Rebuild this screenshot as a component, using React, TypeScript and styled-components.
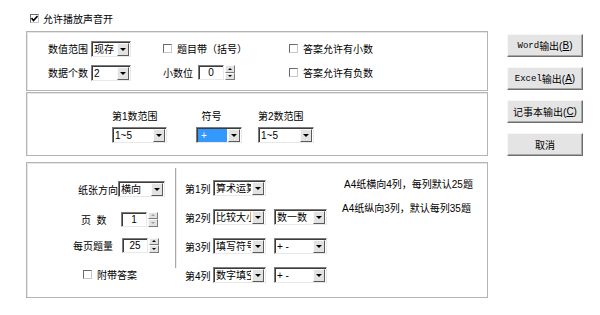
import React from "react";
import styled, { createGlobalStyle, css } from "styled-components";

const Global = createGlobalStyle`
  html, body { margin: 0; padding: 0; background: #fff; }
  body { font-family: "Liberation Sans", "Noto Sans CJK SC", sans-serif; font-size: 10px; color: #000; }
  * { box-sizing: border-box; }
`;

const Page = styled.div`
  width: 600px;
  height: 315px;
  display: flex;
  padding: 12px 0 0 26px;
  background: #fff;
`;

const LeftCol = styled.div`
  width: 462px;
  display: flex;
  flex-direction: column;
`;

const RightCol = styled.div`
  margin-left: 19px;
  padding-top: 22px;
  display: flex;
  flex-direction: column;
  gap: 10px;
`;

const Button = styled.div`
  width: 76px;
  height: 23px;
  display: flex;
  align-items: center;
  justify-content: center;
  background: #e4e4e4;
  border: 1px solid;
  border-color: #f8f8f8 #6e6e6e #6e6e6e #f8f8f8;
  box-shadow: inset -1px -1px 0 #a8a8a8;
  font-size: 10px;
  white-space: nowrap;
`;

const Mono = styled.span`
  font-family: "Liberation Mono", "Noto Sans CJK SC", monospace;
  font-size: 9px;
`;

const Group = styled.div<{ $h: number; $mt: number }>`
  height: ${(p) => p.$h}px;
  margin-top: ${(p) => p.$mt}px;
  border: 1px solid #b4b4b4;
  box-shadow: inset 1px 1px 0 #e6e6e6;
`;

const CheckRow = styled.label<{ $gap?: number }>`
  display: flex;
  align-items: center;
  gap: ${(p) => p.$gap ?? 5}px;
  height: 16px;
  white-space: nowrap;
`;

const Box = styled.span<{ $checked?: boolean }>`
  width: 9px;
  height: 9px;
  border: 1px solid;
  border-color: #6a6a6a #c8c8c8 #c8c8c8 #6a6a6a;
  background: #fff;
  display: inline-flex;
  align-items: center;
  justify-content: center;
  flex: none;
`;

const TopRow = styled.div`
  height: 12px;
  margin-left: 4px;
  display: flex;
  align-items: center;
`;

const ComboWrap = styled.div<{ $w: number }>`
  width: ${(p) => p.$w}px;
  height: 16px;
  display: flex;
  border: 1px solid;
  border-color: #7c7c7c #e8e8e8 #e8e8e8 #7c7c7c;
  box-shadow: inset 1px 1px 0 #3c3c3c;
  background: #fff;
  padding: 1px 1px 0 1px;
  flex: none;
`;

const ComboText = styled.div<{ $sel?: boolean }>`
  flex: 1;
  overflow: hidden;
  white-space: nowrap;
  line-height: 13px;
  padding-left: 1px;
  margin-right: 1px;
  ${(p) =>
    p.$sel &&
    css`
      background: #3399ff;
      color: #fff;
      padding-left: 3px;
    `}
`;

const ComboBtn = styled.div`
  width: 12px;
  height: 13px;
  background: #e2e2e2;
  border: 1px solid;
  border-color: #fafafa #5a5a5a #5a5a5a #fafafa;
  display: flex;
  align-items: center;
  justify-content: center;
  flex: none;
  &::after {
    content: "";
    border-left: 3px solid transparent;
    border-right: 3px solid transparent;
    border-top: 3px solid #000;
  }
`;

const Combo = ({ w, text, sel }: { w: number; text: string; sel?: boolean }) => (
  <ComboWrap $w={w}>
    <ComboText $sel={sel}>{text}</ComboText>
    <ComboBtn />
  </ComboWrap>
);

const SpinWrap = styled.div`
  display: flex;
  align-items: stretch;
  height: 15px;
  flex: none;
`;

const SpinField = styled.div`
  width: 26px;
  border: 1px solid;
  border-color: #7c7c7c #e8e8e8 #e8e8e8 #7c7c7c;
  box-shadow: inset 1px 1px 0 #3c3c3c;
  background: #fff;
  text-align: center;
  line-height: 13px;
`;

const SpinBtns = styled.div`
  width: 10px;
  margin-left: 1px;
  display: flex;
  flex-direction: column;
`;

const SpinHalf = styled.div<{ $up?: boolean; $dim?: boolean }>`
  flex: 1;
  background: #e2e2e2;
  border: 1px solid;
  border-color: #fafafa #7a7a7a #7a7a7a #fafafa;
  display: flex;
  align-items: center;
  justify-content: center;
  &::after {
    content: "";
    border-left: 2px solid transparent;
    border-right: 2px solid transparent;
    ${(p) =>
      p.$up
        ? css`border-bottom: 2px solid ${p.$dim ? "#a0a0a0" : "#000"};`
        : css`border-top: 2px solid ${p.$dim ? "#a0a0a0" : "#000"};`}
  }
`;

const Spinner = ({ value, dim }: { value: string; dim?: boolean }) => (
  <SpinWrap>
    <SpinField>{value}</SpinField>
    <SpinBtns>
      <SpinHalf $up $dim={dim} />
      <SpinHalf $dim={dim} />
    </SpinBtns>
  </SpinWrap>
);

const Field = styled.div<{ $gap?: number }>`
  display: flex;
  align-items: center;
  gap: ${(p) => p.$gap ?? 3}px;
  height: 17px;
  white-space: nowrap;
`;

const Label = styled.span<{ $w?: number }>`
  white-space: pre;
  ${(p) => p.$w && css`width: ${p.$w}px;`}
`;

/* Group 1 */
const Grid1 = styled.div`
  display: grid;
  grid-template-columns: 115px 126px auto;
  grid-auto-rows: 17px;
  row-gap: 7px;
  padding: 8px 0 0 21px;
`;

/* Group 2 */
const Grid2 = styled.div`
  display: grid;
  grid-template-columns: 84px 62px auto;
  grid-template-rows: 14px 16px;
  row-gap: 5px;
  align-items: center;
  padding: 15px 0 0 85px;
`;

/* Group 3 */
const Split = styled.div`
  display: flex;
  height: 100%;
`;

const LeftPanel = styled.div`
  width: 148px;
  display: flex;
  flex-direction: column;
`;

const PanelRow = styled.div<{ $indent: number; $mt: number }>`
  display: flex;
  align-items: center;
  height: 16px;
  margin-left: ${(p) => p.$indent}px;
  margin-top: ${(p) => p.$mt}px;
  white-space: nowrap;
`;

const VLine = styled.div`
  width: 1px;
  height: 100px;
  margin-top: 5px;
  background: #a8a8a8;
  box-shadow: 1px 0 0 #ececec;
  flex: none;
`;

const ColsPanel = styled.div`
  width: 168px;
  display: flex;
  flex-direction: column;
  gap: 13px;
  padding: 17px 0 0 9px;
`;

const ColRow = styled.div`
  display: flex;
  align-items: center;
  height: 16px;
  white-space: nowrap;
`;

const ColLabel = styled.span`
  width: 28px;
`;

const InfoPanel = styled.div`
  display: flex;
  flex-direction: column;
  gap: 10px;
  padding-top: 15px;
  white-space: nowrap;
`;

const Info = styled.div<{ $indent: number }>`
  margin-left: ${(p) => p.$indent}px;
  line-height: 14px;
`;

const Check = ({ checked }: { checked?: boolean }) => (
  <Box $checked={checked}>
    {checked && (
      <svg width="7" height="7" viewBox="0 0 7 7">
        <path d="M0.5 3 L2.5 5.5 L6.5 1" fill="none" stroke="#000" strokeWidth="1.6" />
      </svg>
    )}
  </Box>
);

export default function App() {
  return (
    <>
      <Global />
      <Page>
        <LeftCol>
          <TopRow>
            <CheckRow $gap={4}>
              <Check checked />
              <span>允许播放声音开</span>
            </CheckRow>
          </TopRow>

          <Group $h={60} $mt={7}>
            <Grid1>
              <Field>
                <Label>数值范围</Label>
                <Combo w={40} text="现存" />
              </Field>
              <CheckRow>
                <Check />
                <span>题目带（括号）</span>
              </CheckRow>
              <CheckRow>
                <Check />
                <span>答案允许有小数</span>
              </CheckRow>
              <Field>
                <Label>数据个数</Label>
                <Combo w={40} text="2" />
              </Field>
              <Field $gap={5}>
                <Label>小数位</Label>
                <Spinner value="0" />
              </Field>
              <CheckRow>
                <Check />
                <span>答案允许有负数</span>
              </CheckRow>
            </Grid1>
          </Group>

          <Group $h={64} $mt={1}>
            <Grid2>
              <Label>第1数范围</Label>
              <Label>&nbsp;&nbsp;符号</Label>
              <Label>第2数范围</Label>
              <Combo w={55} text="1~5" />
              <Combo w={46} text="+" sel />
              <Combo w={56} text="1~5" />
            </Grid2>
          </Group>

          <Group $h={136} $mt={6}>
            <Split>
              <LeftPanel>
                <PanelRow $indent={51} $mt={18}>
                  <Label>纸张方向</Label>
                  <Combo w={47} text="横向" />
                </PanelRow>
                <PanelRow $indent={54} $mt={14}>
                  <Label $w={40}>{"页  数"}</Label>
                  <Spinner value="1" dim />
                </PanelRow>
                <PanelRow $indent={46} $mt={10}>
                  <Label $w={49}>每页题量</Label>
                  <Spinner value="25" />
                </PanelRow>
                <PanelRow $indent={56} $mt={13}>
                  <CheckRow $gap={5}>
                    <Check />
                    <span>附带答案</span>
                  </CheckRow>
                </PanelRow>
              </LeftPanel>
              <VLine />
              <ColsPanel>
                <ColRow>
                  <ColLabel>第1列</ColLabel>
                  <Combo w={53} text="算术运算" />
                </ColRow>
                <ColRow>
                  <ColLabel>第2列</ColLabel>
                  <Combo w={53} text="比较大小" />
                  <span style={{ width: 8 }} />
                  <Combo w={53} text="数一数" />
                </ColRow>
                <ColRow>
                  <ColLabel>第3列</ColLabel>
                  <Combo w={53} text="填写符号" />
                  <span style={{ width: 8 }} />
                  <Combo w={53} text="+ -" />
                </ColRow>
                <ColRow>
                  <ColLabel>第4列</ColLabel>
                  <Combo w={53} text="数字填空" />
                  <span style={{ width: 8 }} />
                  <Combo w={53} text="+ -" />
                </ColRow>
              </ColsPanel>
              <InfoPanel>
                <Info $indent={0}>A4纸横向4列，每列默认25题</Info>
                <Info $indent={-2}>A4纸纵向3列，默认每列35题</Info>
              </InfoPanel>
            </Split>
          </Group>
        </LeftCol>

        <RightCol>
          <Button>
            <Mono>Word</Mono>输出(<u>B</u>)
          </Button>
          <Button>
            <Mono>Excel</Mono>输出(<u>A</u>)
          </Button>
          <Button>记事本输出(<u>C</u>)</Button>
          <Button>取消</Button>
        </RightCol>
      </Page>
    </>
  );
}
